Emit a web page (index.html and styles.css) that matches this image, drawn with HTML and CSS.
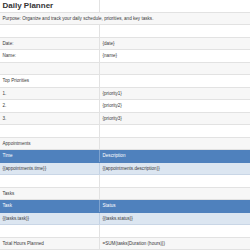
FILE: index.html
```html
<!DOCTYPE html>
<html>
<head>
<meta charset="utf-8">
<link rel="stylesheet" href="styles.css">
</head>
<body>
<div class="sheet">
  <div class="row"><div class="cell title">Daily Planner</div><div class="cell"></div></div>
  <div class="row alt"><div class="cell wide">Purpose: Organize and track your daily schedule, priorities, and key tasks.</div></div>
  <div class="row"><div class="cell"></div><div class="cell"></div></div>
  <div class="row alt"><div class="cell">Date:</div><div class="cell">{date}</div></div>
  <div class="row"><div class="cell">Name:</div><div class="cell">{name}</div></div>
  <div class="row alt"><div class="cell"></div><div class="cell"></div></div>
  <div class="row"><div class="cell">Top Priorities</div><div class="cell"></div></div>
  <div class="row alt"><div class="cell">1.</div><div class="cell">{priority1}</div></div>
  <div class="row"><div class="cell">2.</div><div class="cell">{priority2}</div></div>
  <div class="row alt"><div class="cell">3.</div><div class="cell">{priority3}</div></div>
  <div class="row"><div class="cell"></div><div class="cell"></div></div>
  <div class="row alt"><div class="cell">Appointments</div><div class="cell"></div></div>
  <div class="row head"><div class="cell">Time</div><div class="cell">Description</div></div>
  <div class="row data"><div class="cell">{{appointments.time}}</div><div class="cell">{{appointments.description}}</div></div>
  <div class="row"><div class="cell"></div><div class="cell"></div></div>
  <div class="row alt"><div class="cell">Tasks</div><div class="cell"></div></div>
  <div class="row head"><div class="cell">Task</div><div class="cell">Status</div></div>
  <div class="row data"><div class="cell">{{tasks.task}}</div><div class="cell">{{tasks.status}}</div></div>
  <div class="row"><div class="cell"></div><div class="cell"></div></div>
  <div class="row alt"><div class="cell">Total Hours Planned</div><div class="cell">=SUM(tasks[Duration (hours)])</div></div>
</div>
</body>
</html>
```

FILE: styles.css
```css
html, body {
  margin: 0;
  padding: 0;
  background: #ffffff;
}
.sheet {
  width: 250px;
  font-family: "Liberation Sans", Arial, sans-serif;
  font-size: 4.6px;
  color: #3a3a3a;
}
.row {
  display: grid;
  grid-template-columns: 100px 1fr;
  height: 12.5px;
  box-sizing: border-box;
  border-bottom: 1px solid #e2e2e2;
  background: #ffffff;
}
.row.alt {
  background: #f7f7f7;
}
.cell {
  display: flex;
  align-items: center;
  padding: 0 2.5px;
  white-space: nowrap;
  overflow: visible;
  border-right: 1px solid #e2e2e2;
  min-width: 0;
}
.cell:last-child {
  border-right: none;
}
.cell.wide {
  grid-column: 1 / 3;
  border-right: none;
}
.title {
  font-size: 8px;
  font-weight: bold;
  color: #333333;
}
.row.head {
  background: #4f81bd;
  color: #ffffff;
  border-bottom-color: #4f81bd;
}
.row.head .cell {
  border-right-color: #7fa3cf;
}
.row.data {
  background: #dce6f1;
  border-bottom-color: #c9d6e6;
}
.row.data .cell {
  border-right-color: #c3d2e4;
}
```
